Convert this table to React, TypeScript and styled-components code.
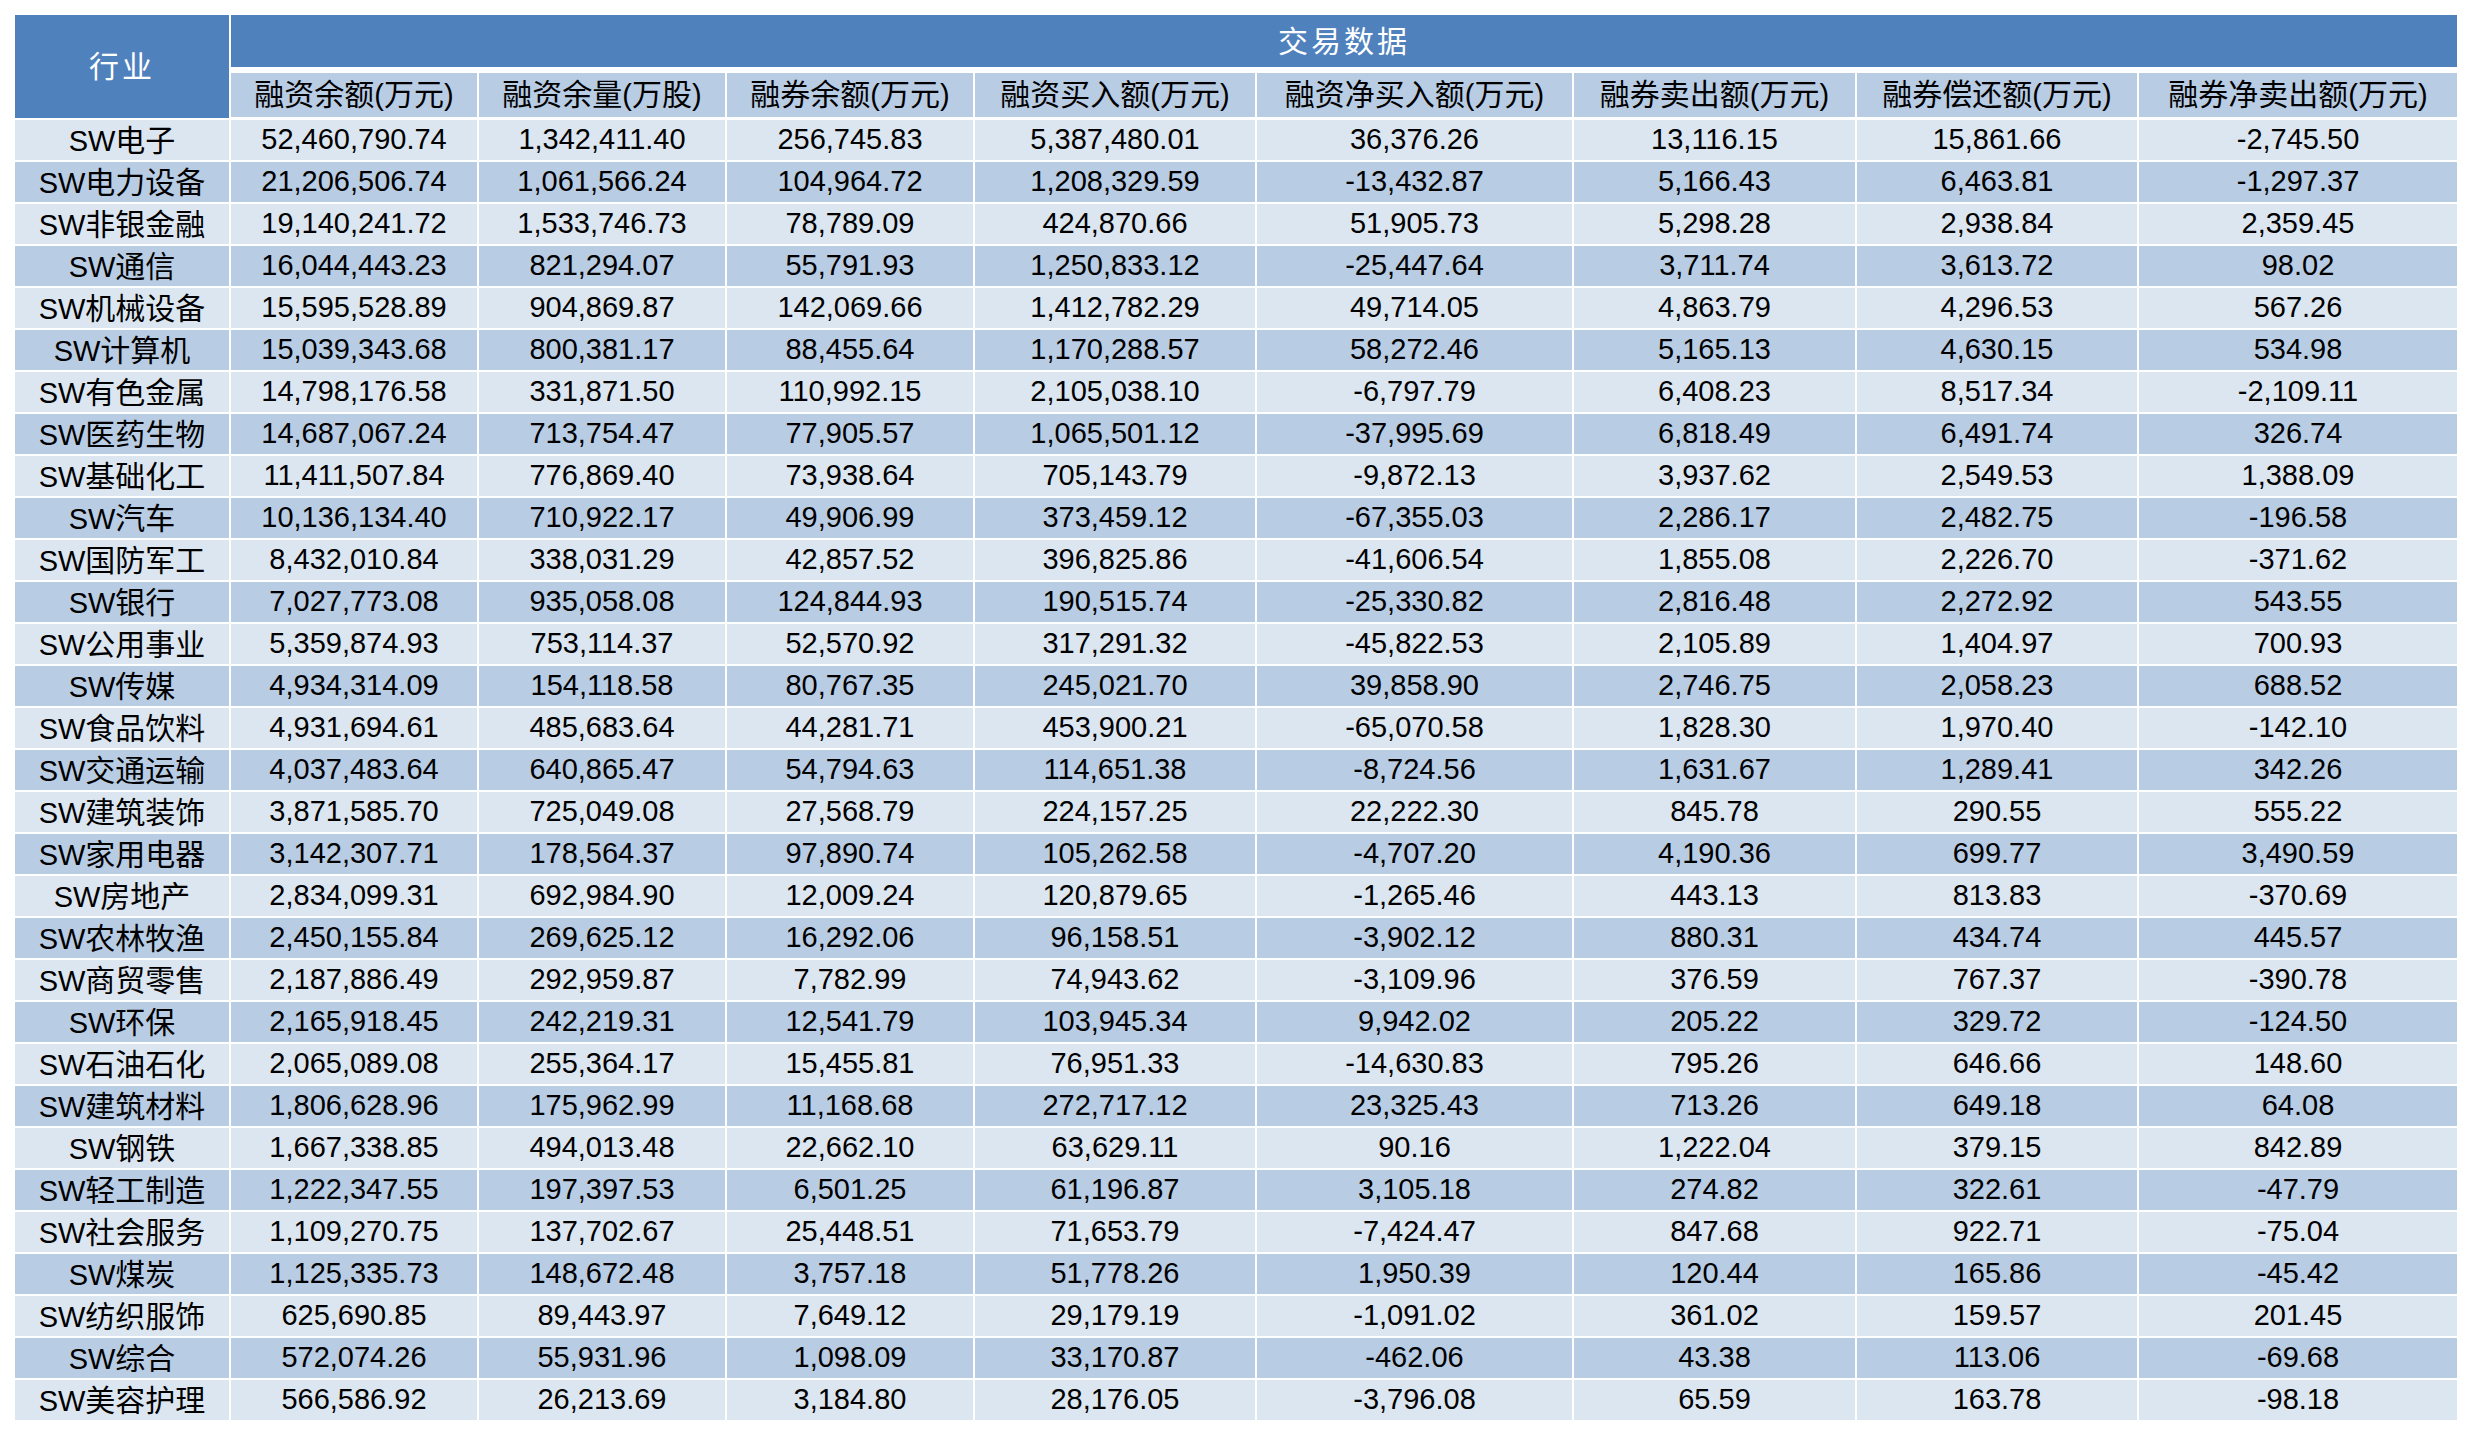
import React from "react";
import styled, { createGlobalStyle } from "styled-components";

const GlobalStyle = createGlobalStyle`
  html, body {
    margin: 0;
    padding: 0;
    background: #ffffff;
  }
`;

const LATIN = `"Liberation Sans", Arial, sans-serif`;
const HAN = `"Noto Sans CJK SC", "Liberation Sans", sans-serif`;

const COLS = [214, 246, 246, 246, 280, 315, 281, 280, 318];

const HEADS = [
  "融资余额(万元)",
  "融资余量(万股)",
  "融券余额(万元)",
  "融资买入额(万元)",
  "融资净买入额(万元)",
  "融券卖出额(万元)",
  "融券偿还额(万元)",
  "融券净卖出额(万元)",
];

const ROWS: string[][] = [
  ["SW电子", "52,460,790.74", "1,342,411.40", "256,745.83", "5,387,480.01", "36,376.26", "13,116.15", "15,861.66", "-2,745.50"],
  ["SW电力设备", "21,206,506.74", "1,061,566.24", "104,964.72", "1,208,329.59", "-13,432.87", "5,166.43", "6,463.81", "-1,297.37"],
  ["SW非银金融", "19,140,241.72", "1,533,746.73", "78,789.09", "424,870.66", "51,905.73", "5,298.28", "2,938.84", "2,359.45"],
  ["SW通信", "16,044,443.23", "821,294.07", "55,791.93", "1,250,833.12", "-25,447.64", "3,711.74", "3,613.72", "98.02"],
  ["SW机械设备", "15,595,528.89", "904,869.87", "142,069.66", "1,412,782.29", "49,714.05", "4,863.79", "4,296.53", "567.26"],
  ["SW计算机", "15,039,343.68", "800,381.17", "88,455.64", "1,170,288.57", "58,272.46", "5,165.13", "4,630.15", "534.98"],
  ["SW有色金属", "14,798,176.58", "331,871.50", "110,992.15", "2,105,038.10", "-6,797.79", "6,408.23", "8,517.34", "-2,109.11"],
  ["SW医药生物", "14,687,067.24", "713,754.47", "77,905.57", "1,065,501.12", "-37,995.69", "6,818.49", "6,491.74", "326.74"],
  ["SW基础化工", "11,411,507.84", "776,869.40", "73,938.64", "705,143.79", "-9,872.13", "3,937.62", "2,549.53", "1,388.09"],
  ["SW汽车", "10,136,134.40", "710,922.17", "49,906.99", "373,459.12", "-67,355.03", "2,286.17", "2,482.75", "-196.58"],
  ["SW国防军工", "8,432,010.84", "338,031.29", "42,857.52", "396,825.86", "-41,606.54", "1,855.08", "2,226.70", "-371.62"],
  ["SW银行", "7,027,773.08", "935,058.08", "124,844.93", "190,515.74", "-25,330.82", "2,816.48", "2,272.92", "543.55"],
  ["SW公用事业", "5,359,874.93", "753,114.37", "52,570.92", "317,291.32", "-45,822.53", "2,105.89", "1,404.97", "700.93"],
  ["SW传媒", "4,934,314.09", "154,118.58", "80,767.35", "245,021.70", "39,858.90", "2,746.75", "2,058.23", "688.52"],
  ["SW食品饮料", "4,931,694.61", "485,683.64", "44,281.71", "453,900.21", "-65,070.58", "1,828.30", "1,970.40", "-142.10"],
  ["SW交通运输", "4,037,483.64", "640,865.47", "54,794.63", "114,651.38", "-8,724.56", "1,631.67", "1,289.41", "342.26"],
  ["SW建筑装饰", "3,871,585.70", "725,049.08", "27,568.79", "224,157.25", "22,222.30", "845.78", "290.55", "555.22"],
  ["SW家用电器", "3,142,307.71", "178,564.37", "97,890.74", "105,262.58", "-4,707.20", "4,190.36", "699.77", "3,490.59"],
  ["SW房地产", "2,834,099.31", "692,984.90", "12,009.24", "120,879.65", "-1,265.46", "443.13", "813.83", "-370.69"],
  ["SW农林牧渔", "2,450,155.84", "269,625.12", "16,292.06", "96,158.51", "-3,902.12", "880.31", "434.74", "445.57"],
  ["SW商贸零售", "2,187,886.49", "292,959.87", "7,782.99", "74,943.62", "-3,109.96", "376.59", "767.37", "-390.78"],
  ["SW环保", "2,165,918.45", "242,219.31", "12,541.79", "103,945.34", "9,942.02", "205.22", "329.72", "-124.50"],
  ["SW石油石化", "2,065,089.08", "255,364.17", "15,455.81", "76,951.33", "-14,630.83", "795.26", "646.66", "148.60"],
  ["SW建筑材料", "1,806,628.96", "175,962.99", "11,168.68", "272,717.12", "23,325.43", "713.26", "649.18", "64.08"],
  ["SW钢铁", "1,667,338.85", "494,013.48", "22,662.10", "63,629.11", "90.16", "1,222.04", "379.15", "842.89"],
  ["SW轻工制造", "1,222,347.55", "197,397.53", "6,501.25", "61,196.87", "3,105.18", "274.82", "322.61", "-47.79"],
  ["SW社会服务", "1,109,270.75", "137,702.67", "25,448.51", "71,653.79", "-7,424.47", "847.68", "922.71", "-75.04"],
  ["SW煤炭", "1,125,335.73", "148,672.48", "3,757.18", "51,778.26", "1,950.39", "120.44", "165.86", "-45.42"],
  ["SW纺织服饰", "625,690.85", "89,443.97", "7,649.12", "29,179.19", "-1,091.02", "361.02", "159.57", "201.45"],
  ["SW综合", "572,074.26", "55,931.96", "1,098.09", "33,170.87", "-462.06", "43.38", "113.06", "-69.68"],
  ["SW美容护理", "566,586.92", "26,213.69", "3,184.80", "28,176.05", "-3,796.08", "65.59", "163.78", "-98.18"],
];

const Page = styled.div`
  padding: 13px;
`;

const Sheet = styled.table`
  table-layout: fixed;
  border-collapse: separate;
  border-spacing: 2px;
  width: ${COLS.reduce((a, b) => a + b, 0) + 2 * (COLS.length + 1)}px;
  font-family: ${LATIN};
  font-size: 29px;
  color: #000;
`;

const TitleCell = styled.th<{ $bottom?: number }>`
  box-sizing: border-box;
  padding: 0;
  background: #4f81bd;
  background-clip: padding-box;
  border-bottom: ${(p) => p.$bottom ?? 0}px solid #ffffff;
  color: #ffffff;
  font-weight: normal;
  text-align: center;
  vertical-align: middle;
  letter-spacing: 3px;
  height: 56px;
`;

const ColHead = styled.th`
  box-sizing: border-box;
  height: 45px;
  padding: 0 0 2px;
  background: #b8cce4;
  background-clip: padding-box;
  border-bottom: 1px solid #ffffff;
  font-weight: normal;
  text-align: center;
  vertical-align: middle;
  white-space: nowrap;
`;

const Row = styled.tr<{ $alt: boolean }>`
  background: ${(p) => (p.$alt ? "#b8cce4" : "#dce6f1")};
`;

const Cell = styled.td`
  box-sizing: border-box;
  height: 40px;
  padding: 0 0 1px;
  text-align: center;
  vertical-align: middle;
  white-space: nowrap;
  line-height: 1;
`;

const Han = styled.span`
  font-family: ${HAN};
  font-size: 30px;
  line-height: 1;
`;

function Mixed({ text }: { text: string }) {
  const parts = text.split(/([\u4e00-\u9fff]+)/);
  return (
    <>
      {parts.map((part, i) =>
        /[\u4e00-\u9fff]/.test(part) ? <Han key={i}>{part}</Han> : part ? <span key={i}>{part}</span> : null
      )}
    </>
  );
}

export default function App() {
  return (
    <>
      <GlobalStyle />
      <Page>
        <Sheet>
          <colgroup>
            {COLS.map((w, i) => (
              <col key={i} style={{ width: w }} />
            ))}
          </colgroup>
          <thead>
            <tr>
              <TitleCell rowSpan={2} style={{ height: "auto" }}>
                <Mixed text="行业" />
              </TitleCell>
              <TitleCell colSpan={8} $bottom={4}>
                <Mixed text="交易数据" />
              </TitleCell>
            </tr>
            <tr>
              {HEADS.map((h) => (
                <ColHead key={h}>
                  <Mixed text={h} />
                </ColHead>
              ))}
            </tr>
          </thead>
          <tbody>
            {ROWS.map((r, i) => (
              <Row key={r[0]} $alt={i % 2 === 1}>
                {r.map((v, j) => (
                  <Cell key={j}>
                    <Mixed text={v} />
                  </Cell>
                ))}
              </Row>
            ))}
          </tbody>
        </Sheet>
      </Page>
    </>
  );
}
